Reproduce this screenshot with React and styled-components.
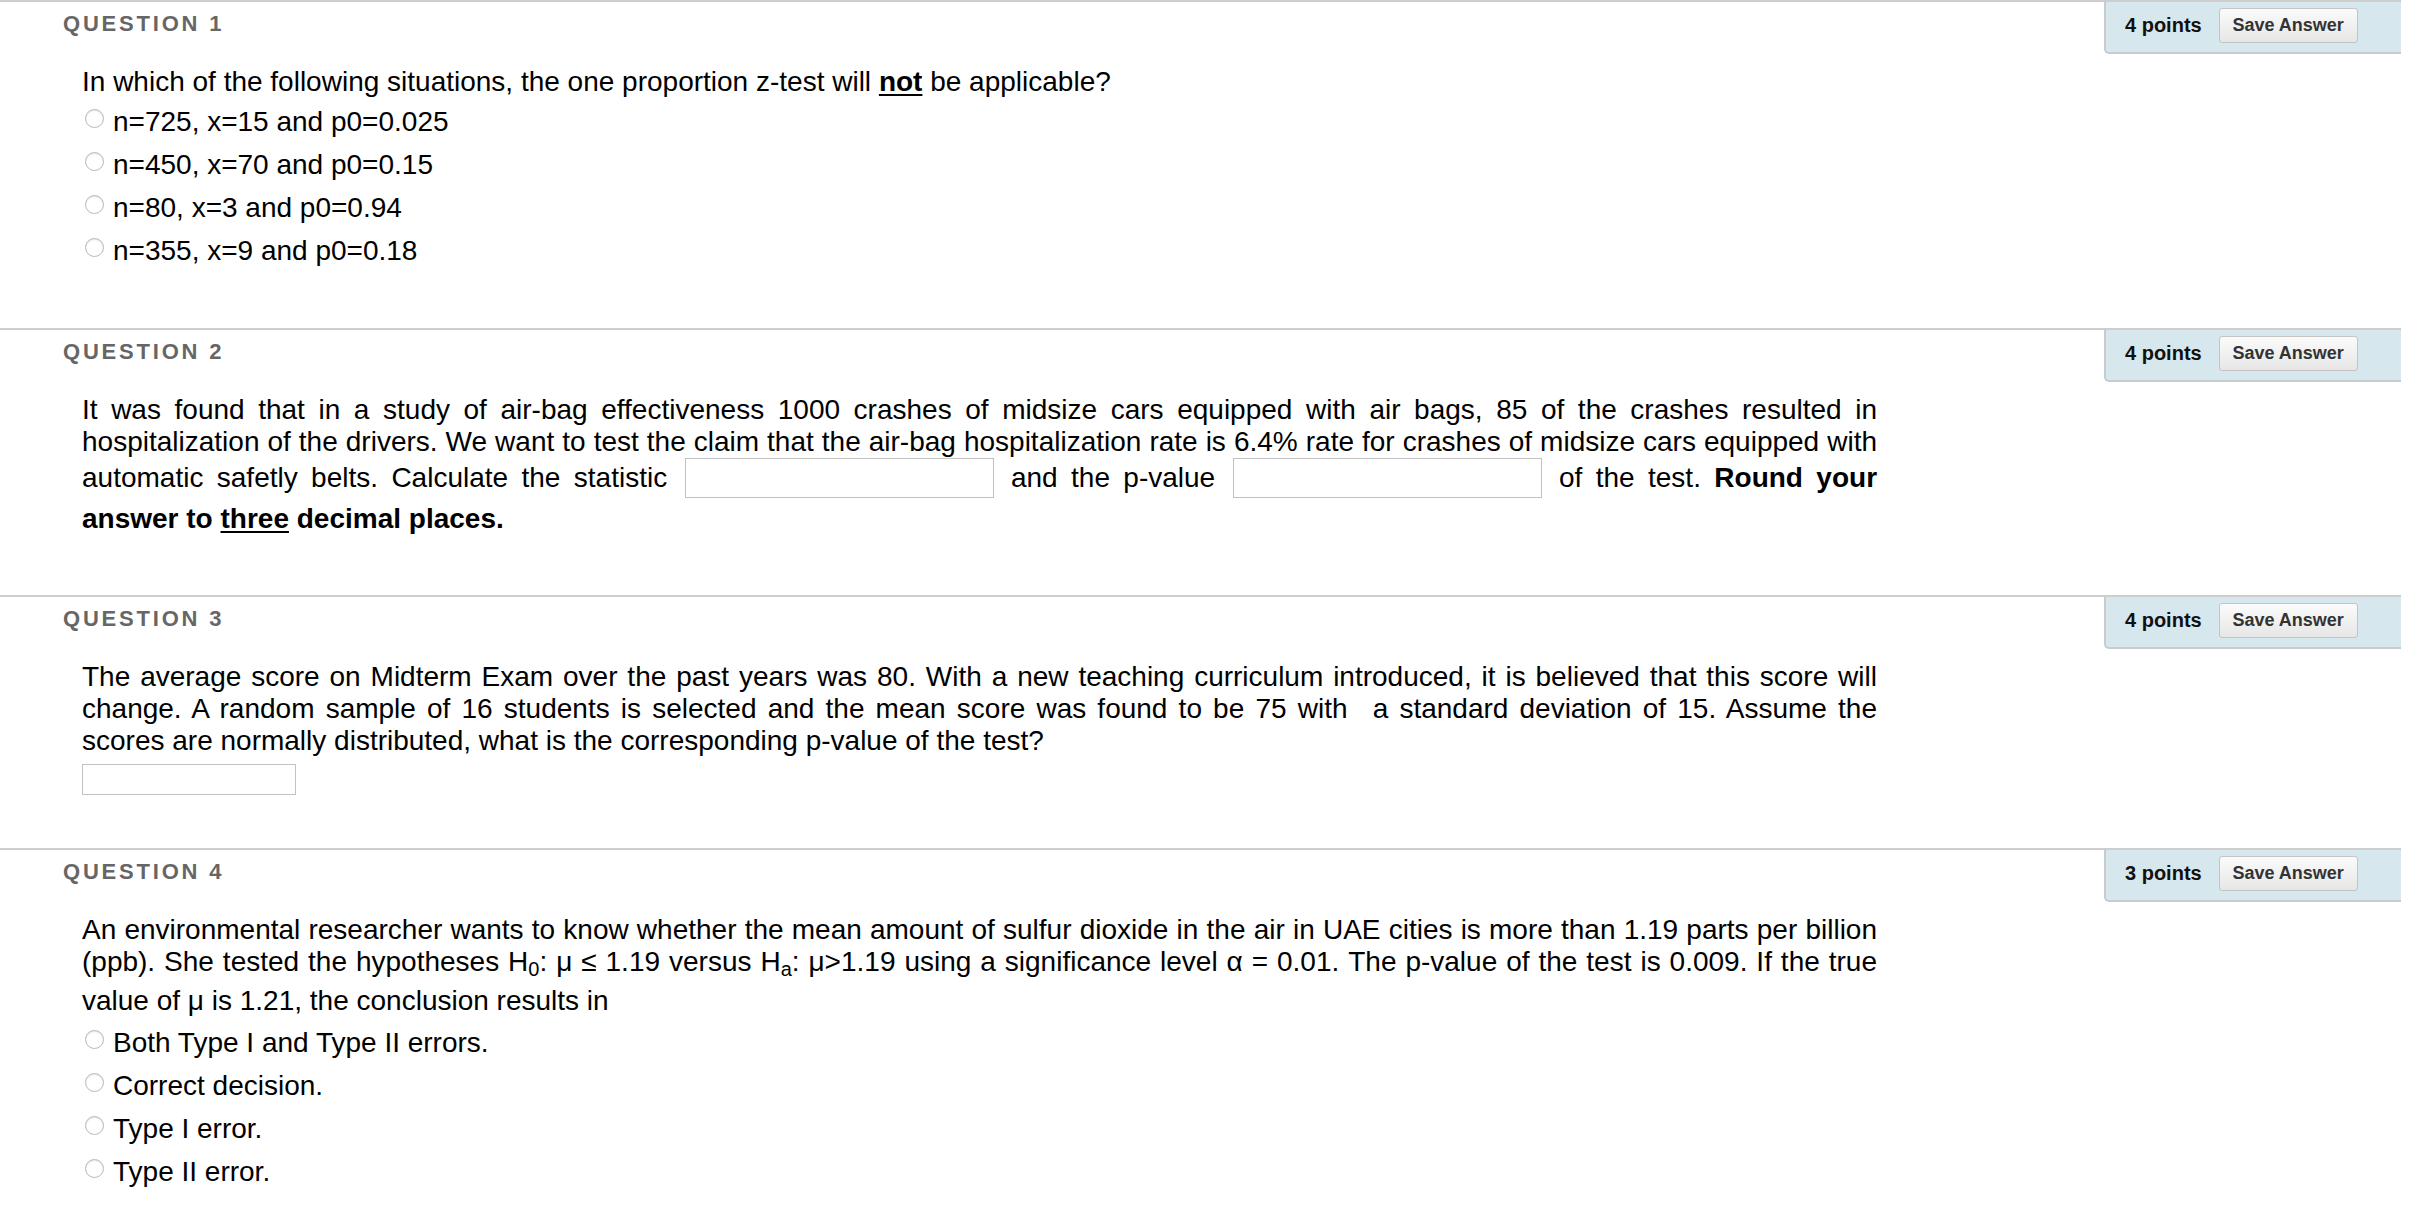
import React from 'react';
import styled, { createGlobalStyle } from 'styled-components';

const Global = createGlobalStyle`
  html, body { margin: 0; padding: 0; background: #fff; }
  body { font-family: 'Liberation Sans', Arial, sans-serif; color: #000; }
`;

const Page = styled.div`
  width: 2401px;
`;

const Block = styled.section`
  border-top: 2px solid #cdcdcd;
  padding-bottom: ${p => p.tail || 56}px;
`;

const Header = styled.div`
  display: flex;
  justify-content: space-between;
  align-items: flex-start;
`;

const Label = styled.h3`
  margin: 0;
  padding: 10px 0 0 63px;
  font-size: 22px;
  line-height: 24px;
  font-weight: bold;
  letter-spacing: 2.8px;
  color: #666;
`;

const Points = styled.div`
  box-sizing: border-box;
  width: 297px;
  height: 52px;
  display: flex;
  align-items: center;
  gap: 17px;
  padding: 0 0 3px 19px;
  background: #d6e7ee;
  border-left: 2px solid #c6cdd0;
  border-bottom: 2px solid #c6cdd0;
  border-bottom-left-radius: 5px;
  font-size: 20px;
  font-weight: bold;
  color: #111;
`;

const SaveButton = styled.button`
  box-sizing: border-box;
  width: 139px;
  height: 35px;
  padding: 0;
  font-family: 'Liberation Sans', Arial, sans-serif;
  font-size: 18px;
  font-weight: bold;
  color: #333;
  background: linear-gradient(#fbfbfb, #e6e6e6);
  border: 1px solid #c4c4c4;
  border-radius: 3px;
`;

const Body = styled.div`
  width: 1795px;
  padding: 12px 0 0 82px;
  font-size: 28px;
  line-height: 32px;
`;

const Prompt = styled.p`
  margin: 0;
  text-align: ${p => (p.justify ? 'justify' : 'left')};
  u { text-decoration-thickness: 2px; text-underline-offset: 3px; }
  sub { font-size: 20px; line-height: 32px; vertical-align: -5px; }
`;

const Options = styled.div`
  margin-top: ${p => p.gap || 0}px;
`;

const Option = styled.label`
  display: flex;
  align-items: center;
  height: 43px;
`;

const Radio = styled.span`
  box-sizing: border-box;
  width: 19px;
  height: 19px;
  margin: 0 9px 7px 3px;
  border-radius: 50%;
  border: 1px solid #b9b9b9;
  background: radial-gradient(circle at 50% 60%, #fff 55%, #f0f0f0 100%);
  box-shadow: inset 0 1px 1px rgba(0, 0, 0, 0.08);
`;

const Blank = styled.input`
  box-sizing: border-box;
  width: ${p => p.w}px;
  height: ${p => p.h}px;
  margin: 0 ${p => p.side || 0}px ${p => p.under || 0}px;
  padding: 0;
  border: 1px solid #c2c2c2;
  font-size: 16px;
  background: #fff;
  vertical-align: ${p => p.shift || 0}px;
`;

const AnswerBox = styled.div`
  margin-top: 7px;
  line-height: 0;
`;

const questions = [
  { n: 1, pts: 4 },
  { n: 2, pts: 4 },
  { n: 3, pts: 4 },
  { n: 4, pts: 3 },
];

const Head = ({ q }) => (
  <Header>
    <Label>QUESTION {q.n}</Label>
    <Points>
      <span>{q.pts} points</span>
      <SaveButton>Save Answer</SaveButton>
    </Points>
  </Header>
);

const Choices = ({ items, gap }) => (
  <Options gap={gap}>
    {items.map(t => (
      <Option key={t}>
        <Radio />
        <span>{t}</span>
      </Option>
    ))}
  </Options>
);

export default function App() {
  return (
    <Page>
      <Global />
      <Block tail={56}>
        <Head q={questions[0]} />
        <Body>
          <Prompt>
            In which of the following situations, the one proportion z-test will <b><u>not</u></b> be applicable?
          </Prompt>
          <Choices
            gap={2}
            items={[
              'n=725, x=15 and p0=0.025',
              'n=450, x=70 and p0=0.15',
              'n=80, x=3 and p0=0.94',
              'n=355, x=9 and p0=0.18',
            ]}
          />
        </Body>
      </Block>

      <Block tail={60}>
        <Head q={questions[1]} />
        <Body>
          <Prompt justify>
            It was found that in a study of air-bag effectiveness 1000 crashes of midsize cars equipped with air bags, 85 of
            the crashes resulted in hospitalization of the drivers. We want to test the claim that the air-bag
            hospitalization rate is 6.4% rate for crashes of midsize cars equipped with automatic safetly belts. Calculate
            the statistic <Blank w={309} h={40} side={4} under={5} shift={4} /> and the p-value{' '}
            <Blank w={309} h={40} side={4} under={5} shift={4} /> of the test. <b>Round your answer to <u>three</u> decimal places.</b>
          </Prompt>
        </Body>
      </Block>

      <Block tail={53}>
        <Head q={questions[2]} />
        <Body>
          <Prompt justify>
            The average score on Midterm Exam over the past years was 80. With a new teaching curriculum introduced, it is
            believed that this score will change. A random sample of 16 students is selected and the mean score was found to
            be 75 with{'\u00a0\u2002'}a standard deviation of 15. Assume the scores are normally distributed, what is the
            corresponding p-value of the test?
          </Prompt>
          <AnswerBox>
            <Blank w={214} h={31} />
          </AnswerBox>
        </Body>
      </Block>

      <Block tail={40}>
        <Head q={questions[3]} />
        <Body>
          <Prompt justify>
            An environmental researcher wants to know whether the mean amount of sulfur dioxide in the air in UAE cities is
            more than 1.19 parts per billion (ppb). She tested the hypotheses H<sub>0</sub>: μ ≤ 1.19 versus H<sub>a</sub>:
            μ&gt;1.19 using a significance level α = 0.01. The p-value of the test is 0.009. If the true value of μ is 1.21,
            the conclusion results in
          </Prompt>
          <Choices
            gap={4}
            items={['Both Type I and Type II errors.', 'Correct decision.', 'Type I error.', 'Type II error.']}
          />
        </Body>
      </Block>
    </Page>
  );
}
